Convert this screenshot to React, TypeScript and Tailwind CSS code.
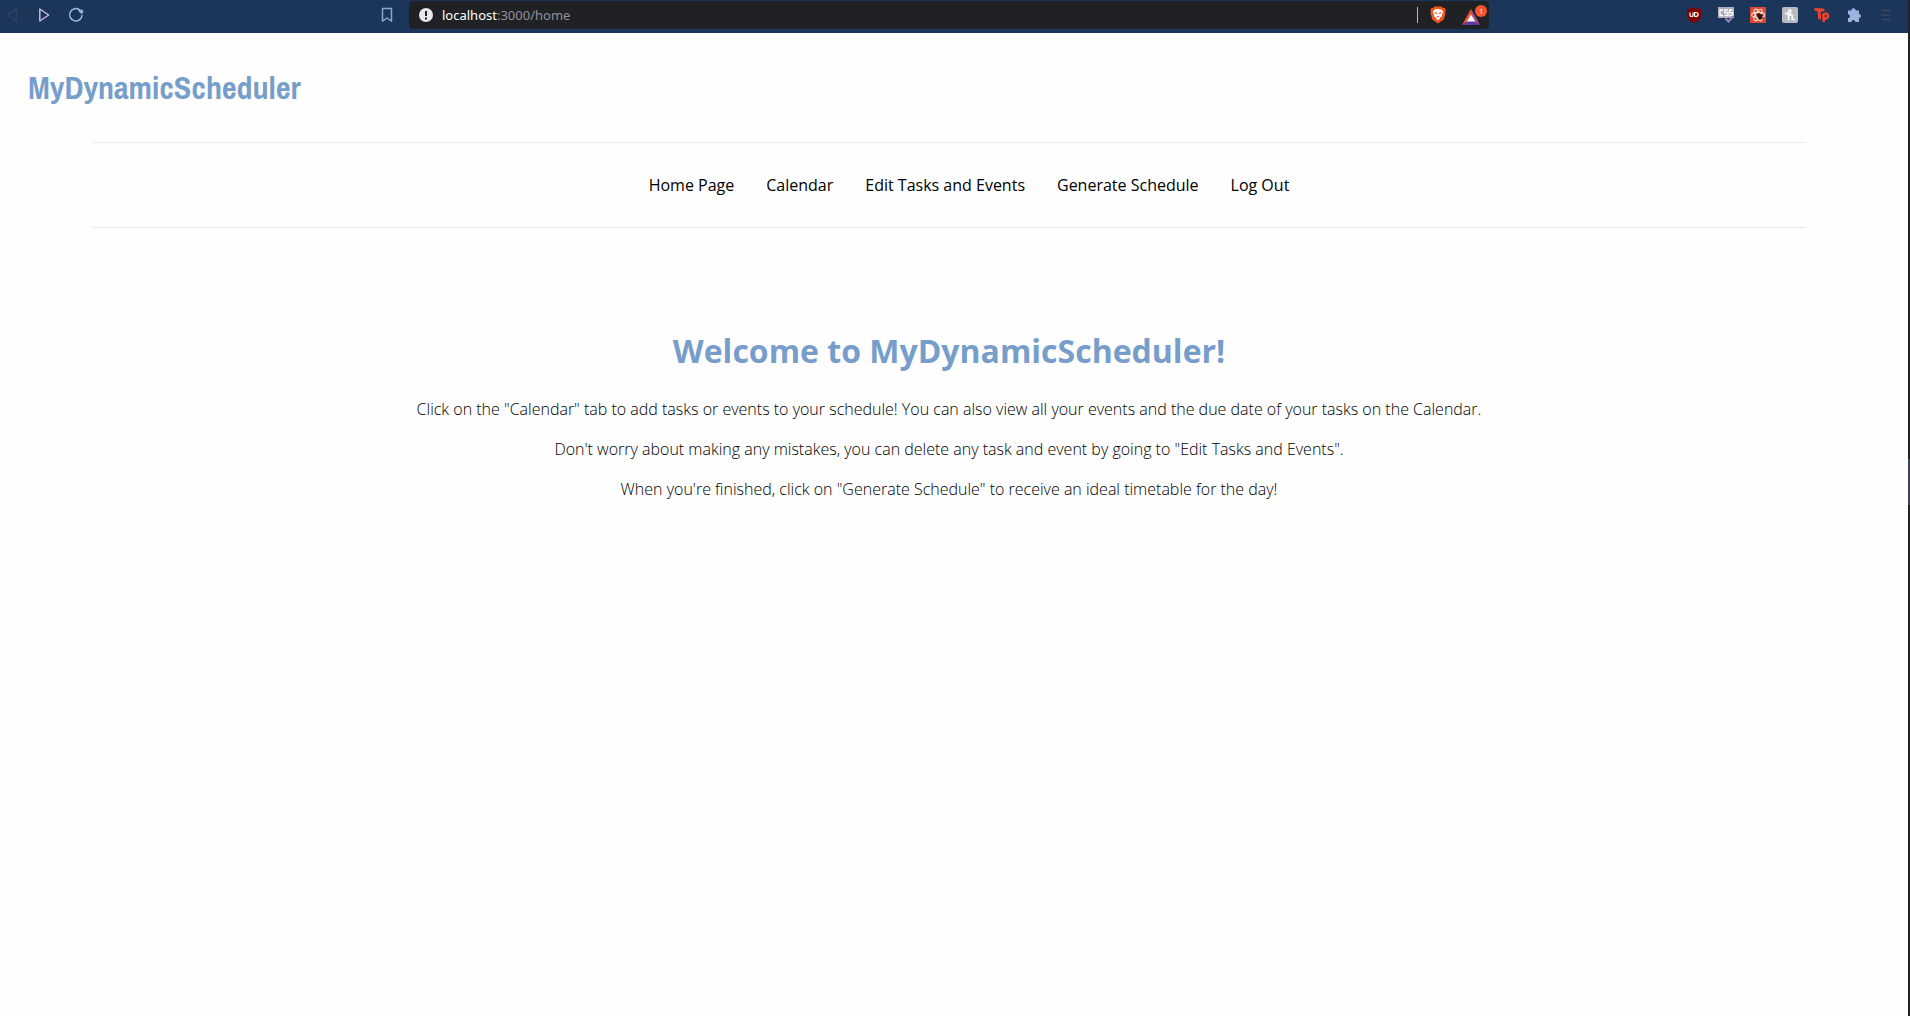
import type { ReactNode } from "react";

const navItems = ["Home Page", "Calendar", "Edit Tasks and Events", "Generate Schedule", "Log Out"];

const paragraphs = [
  'Click on the "Calendar" tab to add tasks or events to your schedule! You can also view all your events and the due date of your tasks on the Calendar.',
  'Don\'t worry about making any mistakes, you can delete any task and event by going to "Edit Tasks and Events".',
  'When you\'re finished, click on "Generate Schedule" to receive an ideal timetable for the day!',
];

function IconButton({ label, children }: { label: string; children: ReactNode }) {
  return (
    <button type="button" aria-label={label} className="flex size-4 items-center justify-center">
      {children}
    </button>
  );
}

function Chrome() {
  return (
    <header className="flex h-[33px] items-start bg-[#1c355b] pt-[1px] pr-[14px] pl-1">
      <div className="flex h-7 flex-1 items-center justify-between">
        <div className="flex gap-4">
          <IconButton label="Back">
            <svg viewBox="0 0 16 16" className="size-4" fill="none" stroke="#35435c" strokeWidth="1.5" strokeLinejoin="round">
              <path d="M12.2 2v12L3.6 8z" />
            </svg>
          </IconButton>
          <IconButton label="Forward">
            <svg viewBox="0 0 16 16" className="size-4" fill="none" stroke="#c5b8dc" strokeWidth="1.5" strokeLinejoin="round">
              <path d="M3.8 2v12l8.9-6z" />
            </svg>
          </IconButton>
          <IconButton label="Reload">
            <svg viewBox="0 0 16 16" className="size-4" fill="none" stroke="#9fb7e6" strokeWidth="1.5" strokeLinecap="round">
              <path d="M11.6 2.8A6.2 6.2 0 1 0 14 8.6" />
              <path d="M11 3.2h3.6v2.9H13z" fill="#9fb7e6" strokeWidth="1" />
            </svg>
          </IconButton>
        </div>
        <div className="pr-[14px]">
          <IconButton label="Bookmark this page">
            <svg viewBox="0 0 16 16" className="size-4" fill="none" stroke="#8ba3d6" strokeWidth="1.5" strokeLinejoin="round">
              <path d="M3.5 1.5h9v12.700L8 11l-4.500 3.200z" />
            </svg>
          </IconButton>
        </div>
      </div>

      <div className="flex h-7 w-[1080px] items-center rounded bg-[#202124] pr-[1px] pl-[10px]">
        <svg viewBox="0 0 14 14" className="mr-1 size-[14px] shrink-0" aria-hidden="true">
          <circle cx="7" cy="7" r="7" fill="#e8e8ea" />
          <path d="M6 3h2v5H6zM6 9.400h2v2H6z" fill="#202124" />
        </svg>
        <div className="relative flex h-full flex-1 items-center pt-[2px] pl-[5px] font-['Noto_Sans','Open_Sans',sans-serif] text-[13px]">
          <span className="pointer-events-none text-[#94919b]">
            <span className="text-white">localhost</span>:3000/home
          </span>
          <input
            aria-label="Address"
            defaultValue="localhost:3000/home"
            className="absolute inset-0 w-full bg-transparent pl-[5px] text-transparent outline-none"
          />
        </div>
        <span className="mr-3 h-4 w-px bg-[#b8b8bc]" />
        <button type="button" aria-label="Brave Shields" className="mr-4">
          <svg viewBox="0 0 16 18" className="h-[18px] w-4">
            <path d="M4.500.5h7l1.500 1.500 1.700-.1 1.100 2.500-.7 1.400.4 1.400-1.700 6.200L8 17.500l-5.800-4.100L.5 7.200l.4-1.400L.2 4.400l1.100-2.500L3 2z" fill="#f2521c" />
            <path d="M8 3l3.300.5 2 2.400-1.500 2.600.4 1.800-2.400 1.400-.2 1.300L8 14.300 6.400 13l-.2-1.300-2.400-1.400.4-1.800-1.500-2.600 2-2.400z" fill="#fff" />
            <path d="M4.500 6l2.200.4L7 8.600 5 7.300zM11.500 6l-2.200.4L9 8.600l2-1.300zM6.600 10.200L8 9.700l1.400.5L8 11.500z" fill="#f2521c" />
          </svg>
        </button>
        <button type="button" aria-label="Brave Rewards" className="relative mt-1 w-[26px]">
          <svg viewBox="0 0 18 16" className="h-4 w-[18px]">
            <path d="M9 0L0 16l9-5z" fill="#f0502e" />
            <path d="M9 0l9 16-9-5z" fill="#a9528f" />
            <path d="M0 16h18l-9-6z" fill="#5c3aa4" />
            <path d="M9 5.500L4.800 12.500h8.400z" fill="#fff" />
          </svg>
          <span className="absolute -top-1 right-[1px] flex size-3 items-center justify-center rounded-full bg-[#fb542b] font-['Open_Sans',sans-serif] text-[8px] leading-none text-white">
            1
          </span>
        </button>
      </div>

      <div className="flex h-7 flex-1 items-center justify-end gap-4">
        <IconButton label="uBlock Origin">
          <svg viewBox="0 0 16 16" className="size-4">
            <path d="M8 0c2 1.500 4 2 7 2.200V8c0 4-3 6-7 8-4-2-7-4-7-8V2.200C4 2 6 1.500 8 0z" fill="#800000" />
            <path d="M4 5.500v2.700q0 1.300 1.500 1.300T7 8.200V5.500" fill="none" stroke="#fff" strokeWidth="1.200" />
            <path d="M8.600 5.500v4h1q2.500 0 2.500-2t-2.500-2z" fill="none" stroke="#fff" strokeWidth="1.200" />
          </svg>
        </IconButton>
        <IconButton label="CSS viewer">
          <svg viewBox="0 0 16 16" className="size-4">
            <path d="M0 0h16v11H0z" fill="#b0aabd" />
            <path d="M5 3H2v5.500h3M10 3H6.800v2.600H10v2.900H6.500M14.600 3h-3v2.600h3v2.900h-3.200" fill="none" stroke="#fff" strokeWidth="1.300" />
            <path d="M7.500 11.500l3 3 5-5.500" fill="none" stroke="#8f82b4" strokeWidth="2.200" />
          </svg>
        </IconButton>
        <IconButton label="React Developer Tools">
          <svg viewBox="0 0 16 16" className="size-4">
            <path d="M0 0h16v16H0z" fill="#dc4932" />
            <g fill="none" stroke="#f7dccb" strokeWidth="1.100">
              <ellipse cx="8" cy="8" rx="6.500" ry="2.600" />
              <ellipse cx="8" cy="8" rx="6.500" ry="2.600" transform="rotate(60 8 8)" />
              <ellipse cx="8" cy="8" rx="6.500" ry="2.600" transform="rotate(120 8 8)" />
            </g>
            <path d="M7 7l2-1 1.500 1L13 7.500l-1 1.500 1 2.500-2.500.5L9 12.500 7.500 10z" fill="#241712" />
          </svg>
        </IconButton>
        <IconButton label="Honey">
          <svg viewBox="0 0 16 16" className="size-4">
            <rect width="16" height="16" rx="2" fill="#b9b9c1" />
            <path d="M3.500 6.500h2M6.500 13V4.500q.2-1.700 1.500-1.500t.7 2.500L6.800 9.500q1.600-2.300 2.900-1.500t.3 3.200q0 1.800 2.200 1.300" fill="none" stroke="#fff" strokeWidth="1.500" strokeLinecap="round" />
          </svg>
        </IconButton>
        <IconButton label="Toucan">
          <svg viewBox="0 0 16 16" className="size-4" fill="none" stroke="#e8442e" strokeWidth="3" strokeLinecap="round">
            <path d="M1.800 2.500l7.400.4M5 3l.6 8.200" />
            <path d="M9.300 7.500l.4 6.500M9.500 8q2-2.300 4-.7 1.500 2.500-.7 3.700-1.500.7-3-.1" strokeWidth="2.600" />
          </svg>
        </IconButton>
        <IconButton label="Extensions">
          <svg viewBox="0 0 16 16" className="size-4" fill="#9fb3e3">
            <path d="M2 3.500h3.300a2.200 2.200 0 1 1 4.400 0H13v3.600a2 2 0 1 1 0 4V15H9.400a2 2 0 0 0-4 0H2v-3.800a2 2 0 0 0 0-4z" />
          </svg>
        </IconButton>
        <IconButton label="Menu">
          <svg viewBox="0 0 16 16" className="size-4" stroke="#40495c" strokeWidth="1.600" strokeLinecap="round">
            <path d="M4 3.500h8M4 8h8M4 12.500h8" />
          </svg>
        </IconButton>
      </div>
    </header>
  );
}

export default function App() {
  return (
    <div className="flex min-h-screen bg-[#fefefe] font-['Open_Sans',sans-serif] text-base text-black">
      <div className="min-w-0 flex-1">
        <Chrome />
        <div className="pr-[10px]">
          <h1 className="pt-9 pl-7 font-['Archivo_Narrow','Arial_Narrow','Roboto_Condensed','Open_Sans_Condensed','Liberation_Sans',sans-serif] text-[32px] leading-[38px] font-bold text-[#779ecb]">
            MyDynamicScheduler
          </h1>
          <nav className="mx-auto mt-[35px] w-[1714px] max-w-full border-y border-[#ebebeb] py-[30px] pl-10">
            <ul className="flex justify-center gap-8">
              {navItems.map((item) => (
                <li key={item}>
                  <a href="#">{item}</a>
                </li>
              ))}
            </ul>
          </nav>
          <main className="mt-[101px] text-center">
            <h2 className="text-[32px] leading-[44px] font-bold text-[#779ecb]">Welcome to MyDynamicScheduler!</h2>
            <div className="mt-6 flex flex-col gap-4 font-light">
              {paragraphs.map((text) => (
                <p key={text}>{text}</p>
              ))}
            </div>
          </main>
        </div>
      </div>
      <div className="w-[2px] bg-[#222222] pt-[459px]">
        <div className="h-[46px] bg-[#3b4560]" />
      </div>
    </div>
  );
}
